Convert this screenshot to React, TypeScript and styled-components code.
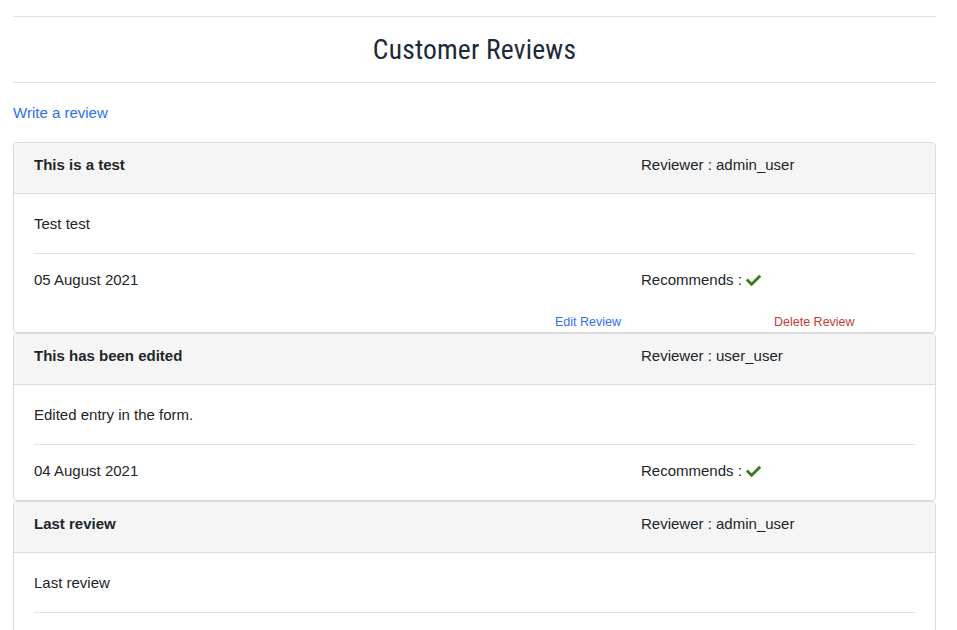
import React from "react";
import styled, { createGlobalStyle } from "styled-components";
import { FaCheck } from "react-icons/fa";

const Global = createGlobalStyle`
  html, body { margin: 0; padding: 0; background: #ffffff; }
  body { font-family: "Liberation Sans", Arial, Helvetica, sans-serif; color: #212529; }
`;

const Page = styled.div`
  margin-left: 13px;
  width: 923px;
  padding-top: 16px;
`;

const Rule = styled.hr`
  margin: 0;
  border: 0;
  border-top: 1px solid #e2e2e2;
`;

const Title = styled.h1`
  margin: 0;
  height: 65px;
  display: flex;
  align-items: center;
  justify-content: center;
  font-family: "Liberation Sans Narrow", "Roboto Condensed", Roboto, sans-serif;
  font-weight: 400;
  font-size: 27.5px;
  color: #1d2a3a;
  letter-spacing: 0.2px;
`;

const WriteLink = styled.a`
  display: block;
  margin-top: 19px;
  margin-bottom: 18px;
  font-size: 15px;
  line-height: 22px;
  color: #2f6fef;
  text-decoration: none;
`;

const Card = styled.div`
  border: 1px solid #dcdcdc;
  border-radius: 4px;
  overflow: hidden;
`;

const Row = styled.div`
  display: grid;
  grid-template-columns: 607px 1fr;
  font-size: 15px;
  line-height: 22px;
`;

const CardHeader = styled.div`
  background: #f5f5f5;
  border-bottom: 1px solid #dcdcdc;
  padding: 11px 20px 17px;
`;

const HeadTitle = styled.div`
  font-weight: 700;
`;

const CardBody = styled.div`
  padding: 19px 20px 0;
`;

const Content = styled.div`
  font-size: 15px;
  line-height: 22px;
  padding-bottom: 18px;
  border-bottom: 1px solid #e2e2e2;
`;

const MetaRow = styled(Row)<{ $owner?: boolean }>`
  padding-top: 15px;
  padding-bottom: ${(p) => (p.$owner ? "22px" : "18px")};
`;

const Recommend = styled.div`
  display: flex;
  align-items: center;
  gap: 4px;
  svg { color: #3a7d1a; width: 15px; height: 15px; }
`;

const Actions = styled.div`
  display: flex;
  gap: 153px;
  padding-left: 521px;
  font-size: 12.5px;
  line-height: 18px;
  padding-bottom: 1px;
`;

const ActionLink = styled.a<{ $danger?: boolean }>`
  text-decoration: none;
  color: ${(p) => (p.$danger ? "#c23b3b" : "#2f6fef")};
`;

type Review = {
  title: string;
  reviewer: string;
  text: string;
  date: string;
  owner?: boolean;
};

const reviews: Review[] = [
  { title: "This is a test", reviewer: "admin_user", text: "Test test", date: "05 August 2021", owner: true },
  { title: "This has been edited", reviewer: "user_user", text: "Edited entry in the form.", date: "04 August 2021" },
  { title: "Last review", reviewer: "admin_user", text: "Last review", date: "03 August 2021" },
];

export default function App() {
  return (
    <>
      <Global />
      <Page>
        <Rule />
        <Title>Customer Reviews</Title>
        <Rule />
        <WriteLink href="#">Write a review</WriteLink>
        {reviews.map((r) => (
          <Card key={r.title}>
            <CardHeader>
              <Row>
                <HeadTitle>{r.title}</HeadTitle>
                <div>Reviewer : {r.reviewer}</div>
              </Row>
            </CardHeader>
            <CardBody>
              <Content>{r.text}</Content>
              <MetaRow $owner={r.owner}>
                <div>{r.date}</div>
                <Recommend>
                  Recommends : <FaCheck />
                </Recommend>
              </MetaRow>
              {r.owner && (
                <Actions>
                  <ActionLink href="#">Edit Review</ActionLink>
                  <ActionLink href="#" $danger>
                    Delete Review
                  </ActionLink>
                </Actions>
              )}
            </CardBody>
          </Card>
        ))}
      </Page>
    </>
  );
}
